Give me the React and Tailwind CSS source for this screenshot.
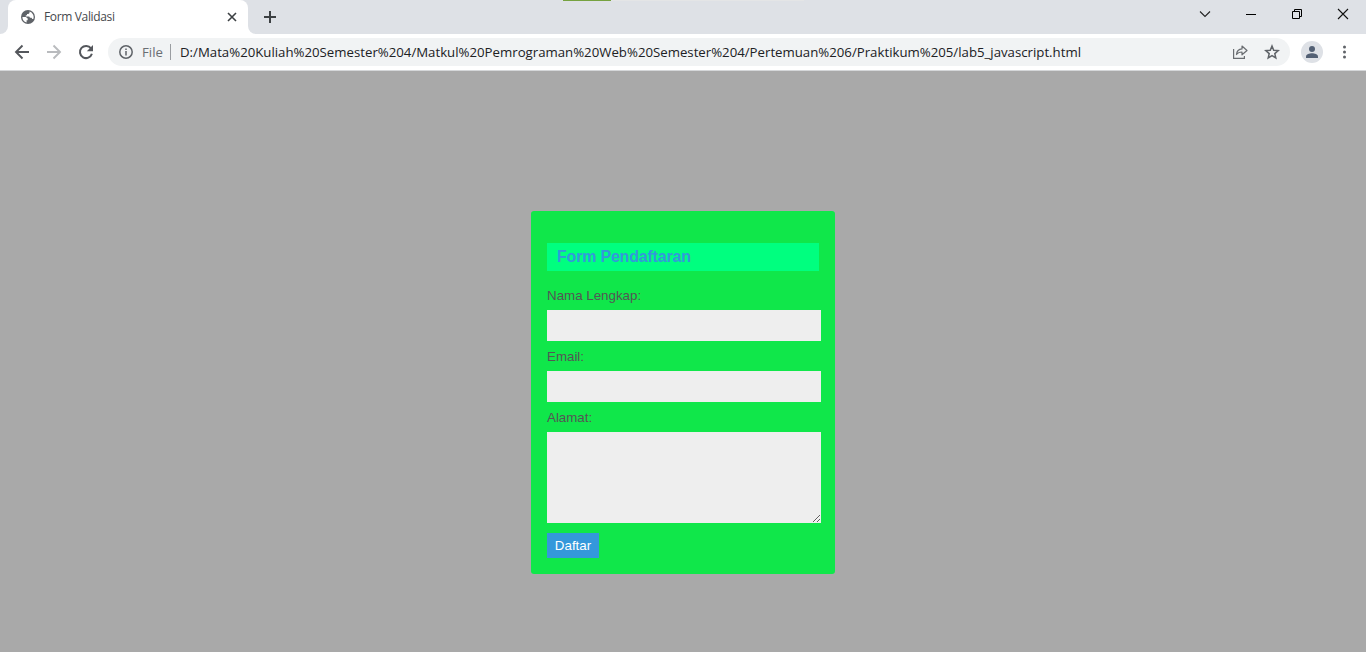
import React from "react";

function TabStrip() {
  return (
    <div className="flex h-[34px] items-stretch bg-[#dee1e6]">
      <div className="flex w-2 items-end bg-white">
        <div className="h-full w-2 rounded-br-lg bg-[#dee1e6]" />
      </div>
      <div className="flex w-60 items-center rounded-t-lg bg-white pl-[13px] pr-[10px]">
        <svg className="size-[14px] shrink-0" viewBox="0 0 14 14">
          <circle cx="7" cy="7" r="7" fill="#5f6368" />
          <path
            d="M8.500 1.600v1.300L7.300 4H6v1.300H4.800v1.200h3.400l.8 1.200h1.500l.8 1.200h1A5.600 5.600 0 0 0 8.500 1.600z"
            fill="#fff"
          />
          <path d="M1.400 7h3.500l1.800 1.500v1.700H5.600v2.200A5.600 5.600 0 0 1 1.400 7z" fill="#fff" />
        </svg>
        <span className="ml-[9px] grow whitespace-nowrap font-['Open_Sans',sans-serif] text-[12px] leading-4 tracking-[-0.35px] text-[#45484c]">
          Form Validasi
        </span>
        <svg className="size-3 shrink-0" viewBox="0 0 12 12" stroke="#3c4043" strokeWidth="1.6">
          <path d="M2 2l8 8M10 2l-8 8" />
        </svg>
      </div>
      <div className="w-2 bg-white">
        <div className="h-full w-2 rounded-bl-lg bg-[#dee1e6]" />
      </div>
      <svg className="ml-2 mt-[11px] size-3 shrink-0" viewBox="0 0 12 12" stroke="#3c4043" strokeWidth="2">
        <path d="M6 0v12M0 6h12" />
      </svg>
      <div className="ml-[287px] h-px w-12 bg-[#76a240]" />
      <div className="h-px w-[193px] bg-[#e4e5e6]" />
      <div className="ml-auto flex items-start pr-[17px] pt-2">
        <svg className="mr-[34px] size-3" viewBox="0 0 12 12" fill="none" stroke="#222" strokeWidth="1.1">
          <path d="M1 3.500l5 5 5-5" />
        </svg>
        <svg className="mr-[34px] size-3" viewBox="0 0 12 12" fill="none" stroke="#000">
          <path d="M1 6.500h10" />
        </svg>
        <svg className="mr-[34px] size-3" viewBox="0 0 12 12" fill="none" stroke="#000">
          <path d="M1.500 3.500h7v7h-7zM3.500 3.500v-2h7v7h-2" />
        </svg>
        <svg className="size-3" viewBox="0 0 12 12" fill="none" stroke="#111" strokeWidth="1.1">
          <path d="M1 1l10 10M11 1L1 11" />
        </svg>
      </div>
    </div>
  );
}

function Toolbar() {
  return (
    <div className="flex h-[37px] items-center border-b border-[#d5d7d9] bg-white pl-[14px] pr-[13px]">
      <svg className="size-4 shrink-0" viewBox="0 0 16 16" fill="none" stroke="#54575c" strokeWidth="1.9">
        <path d="M15 8H2M8.500 1.500L2 8l6.500 6.500" />
      </svg>
      <svg className="ml-4 size-4 shrink-0" viewBox="0 0 16 16" fill="none" stroke="#b9bbbe" strokeWidth="1.9">
        <path d="M1 8h13M7.500 1.500L14 8l-6.500 6.500" />
      </svg>
      <svg className="ml-4 size-4 shrink-0" viewBox="0 0 16 16">
        <path d="M13 4.400A6.100 6.100 0 1 0 13.900 9.800" fill="none" stroke="#54575c" strokeWidth="2" />
        <path d="M15 1v6.200H8.800z" fill="#54575c" />
      </svg>
      <div className="ml-[14px] flex h-7 w-[1182px] items-center rounded-full bg-[#f1f3f4] pl-[11px] pr-[10px]">
        <svg className="size-[14px] shrink-0" viewBox="0 0 14 14" fill="none" stroke="#5f6368" strokeWidth="1.500">
          <circle cx="7" cy="7" r="6.200" />
          <path d="M7 6v4.500M7 3.500V5" />
        </svg>
        <span className="ml-[9px] w-[22px] font-['Open_Sans',sans-serif] text-[13.2px] leading-5 text-[#6a6e73]">
          File
        </span>
        <div className="ml-[6px] h-4 w-px bg-[#9a9da1]" />
        <span className="ml-[9px] grow whitespace-nowrap font-['Open_Sans',sans-serif] text-[13.22px] leading-5 text-[#202124]">
          D:/Mata%20Kuliah%20Semester%204/Matkul%20Pemrograman%20Web%20Semester%204/Pertemuan%206/Praktikum%205/lab5_javascript.html
        </span>
        <svg className="mr-4 size-4 shrink-0" viewBox="0 0 16 16" fill="none" stroke="#6a6d71" strokeWidth="1.200">
          <path d="M1.600 5v9.400h10.800V12" />
          <path d="M4.500 10.500c.3-3.500 2-5.400 5.500-5.600V2l5 4.500-5 4.300V8c-2.500 0-4.200.7-5.500 2.500z" strokeLinejoin="round" />
        </svg>
        <svg className="size-4 shrink-0" viewBox="0 0 16 16" fill="none" stroke="#5f6368" strokeWidth="1.500">
          <path d="M8 2l1.700 4.200 4.500.4-3.400 3 1 4.400L8 11.700 4.200 14l1-4.400-3.400-3 4.500-.4z" />
        </svg>
      </div>
      <div className="ml-[11px] flex size-[22px] items-center justify-center rounded-full bg-[#dee1e6]">
        <svg className="size-3" viewBox="0 0 12 12" fill="#536074">
          <circle cx="6" cy="3" r="3" />
          <path d="M0 12v-1.500C0 8.300 3.500 7.300 6 7.300s6 1 6 3.200V12z" />
        </svg>
      </div>
      <svg className="ml-[17px] h-[14px] w-[9px] shrink-0" viewBox="0 0 9 14" fill="#5f6368">
        <circle cx="4.500" cy="2" r="1.500" />
        <circle cx="4.500" cy="7" r="1.500" />
        <circle cx="4.500" cy="12" r="1.500" />
      </svg>
    </div>
  );
}

function Field({ label, children }) {
  return (
    <label className="flex flex-col">
      <span className="flex h-[30px] items-center text-[13.333px] leading-[15px] text-[#555]">{label}</span>
      {children}
    </label>
  );
}

export default function App() {
  return (
    <div className="flex h-[652px] w-[1366px] flex-col overflow-hidden bg-[#a9a9a9]">
      <TabStrip />
      <Toolbar />
      <main className="flex justify-center pt-[140px] font-['Liberation_Sans',Arial,sans-serif]">
        <form className="flex h-[363px] w-[304px] flex-col rounded-[3px] bg-[#10e74a] px-4 pt-8">
          <h2 className="mb-[9px] h-7 shrink-0 bg-[#00ff7f] pl-[10px] text-base font-bold leading-[27px] tracking-[-0.2px] text-[#3498db]">
            Form Pendaftaran
          </h2>
          <Field label="Nama Lengkap:">
            <input className="h-[31px] w-[274px] bg-[#eee] px-2 text-[13px] outline-none" />
          </Field>
          <Field label="Email:">
            <input className="h-[31px] w-[274px] bg-[#eee] px-2 text-[13px] outline-none" />
          </Field>
          <Field label="Alamat:">
            <textarea className="h-[91px] w-[274px] resize bg-[#eee] p-2 text-[13px] outline-none" />
          </Field>
          <button type="button" className="mt-[10px] h-[25px] w-[52px] bg-[#3498db] text-[13.333px] leading-[25px] text-white">
            Daftar
          </button>
        </form>
      </main>
    </div>
  );
}
